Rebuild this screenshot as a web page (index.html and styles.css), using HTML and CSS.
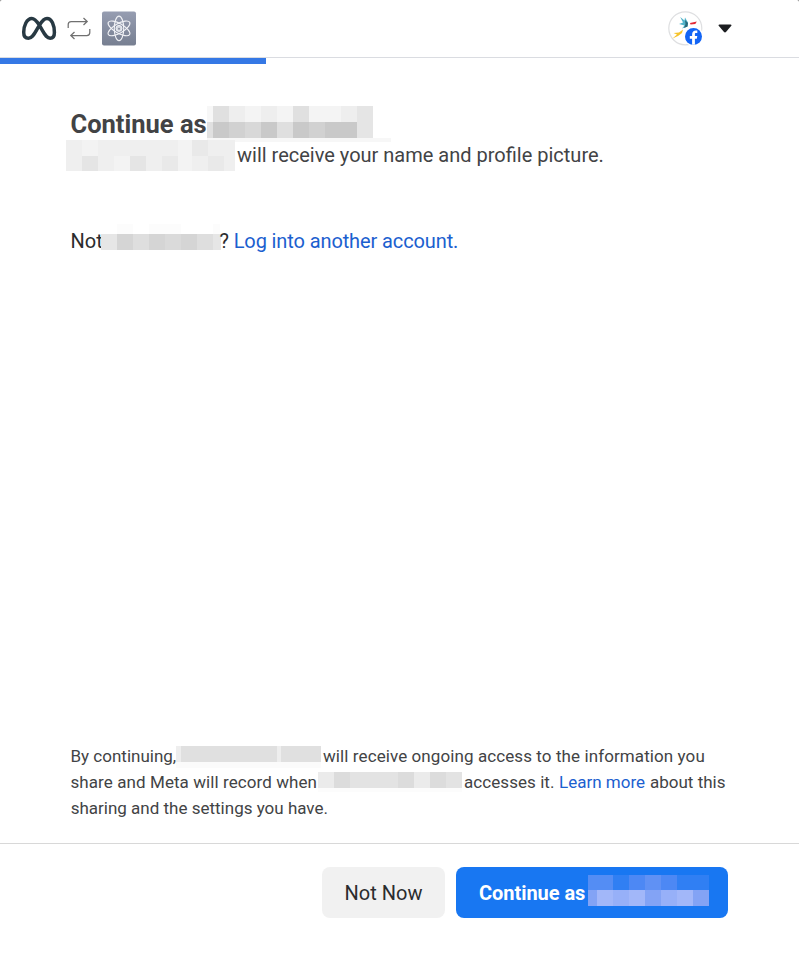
FILE: index.html
```
<!DOCTYPE html>
<html lang="en">
<head>
<meta charset="utf-8">
<title>Continue</title>
<link rel="stylesheet" href="styles.css">
</head>
<body>
<div class="dialog">
  <header class="topbar">
    <svg class="meta" width="36" height="26" viewBox="0 0 36 26" fill="none" stroke="#283943" stroke-width="3.5"><path d="M18 8.5C15.5 4.8 13.7 2.4 10.8 2.4C5.7 2.4 2.7 10 2.7 16.2C2.7 20.1 4.5 22.3 7.5 22.3C10.6 22.3 12.6 19.5 15.8 13.7L18.6 8.9C21.2 4.5 23.1 2.4 26 2.4C30.8 2.4 33.4 9.5 33.4 16.5C33.4 20.3 32.1 22.3 29.2 22.3C26.2 22.3 24.4 19.9 21.2 14.2Z"/></svg>
    <svg class="swap" width="24" height="24" viewBox="0 0 24 24" fill="none" stroke="#707070" stroke-width="1.25"><path d="M1.2 11V7.5Q1.2 4.5 4.2 4.5H20M16.5 1L20.2 4.5L16.5 8M22.8 12V15.5Q22.8 18.5 19.8 18.5H4M7.5 15L3.8 18.5L7.5 22"/></svg>
    <svg class="app" width="34" height="34" viewBox="0 0 34 34">
      <defs><linearGradient id="slate" x2="0" y2="1"><stop stop-color="#969db1"/><stop offset="1" stop-color="#777f91"/></linearGradient></defs>
      <rect y=".5" width="34" height="34" rx="2" fill="url(#slate)"/>
      <g fill="none" stroke="#f0f1f5" stroke-width="1.15"><ellipse cx="17" cy="17.4" rx="4.7" ry="12.3"/><ellipse cx="17" cy="17.4" rx="4.7" ry="12.3" transform="rotate(60 17 17.4)"/><ellipse cx="17" cy="17.4" rx="4.7" ry="12.3" transform="rotate(120 17 17.4)"/></g>
      <circle cx="17" cy="17.4" r="3" fill="#d5d9e1" stroke="#f0f1f5"/><circle cx="17" cy="17.8" r="1" fill="#858c9e"/>
    </svg>
    <svg class="account" width="36" height="36" viewBox="0 0 36 36">
      <circle cx="17.3" cy="17.3" r="16.5" fill="#fff" stroke="#dedfe1" stroke-width="1.2"/>
      <path d="M12.2 6L16.5 9.5L17 6.5L20 11.5L19.5 15.5L14 17.5L16.5 14.5L11 13L15 11.5Z" fill="#52b4ca"/><path d="M17 9L20 12L19.5 15.5L16 17L17.5 13Z" fill="#27697b"/>
      <path d="M22 12L28.8 10.6L27.3 13L22.5 13.5Z" fill="#e32936"/>
      <path d="M5.5 22L11 21.5L15 18.5L14 22L10 25L4.5 27.5L9 23.5Z" fill="#f6c32c"/>
      <circle cx="25.5" cy="25.2" r="10" fill="#fff"/><circle cx="25.5" cy="25.4" r="8.5" fill="#1264f5"/>
      <path d="M24.1 33.7V27.7H21.8V24.9H24.1V23.5C24.1 20.5 25.6 19.4 28 19.4L29.3 19.5V22H28C27.1 22 26.9 22.5 26.9 23.4V24.9H29.3L28.8 27.7H26.9V33.7Z" fill="#fff"/>
    </svg>
    <svg class="caret" width="14" height="9" viewBox="0 0 14 9"><path d="M1.4.4H12.6Q14 .6 13.3 1.8L8.2 7.8Q7 9 5.8 7.8L.7 1.8Q0 .6 1.4.4Z" fill="#1c1e21"/></svg>
  </header>
  <div class="track"><div class="progress"></div></div>

  <main class="content">
    <h1 class="line title"><span class="t-title">Continue as</span><svg class="m-title" width="184" height="36" shape-rendering="crispEdges">
      <path fill="#f7f7f7" d="M0 0h6v16H0zM0 32h184v4H0z"/>
      <path fill="#e0e0e0" d="M6 0h16v16H6zM86 0h16v16H86zM0 16h6v16H0z"/>
      <path fill="#eee" d="M22 0h16v16H22zM54 0h16v16H54zM134 0h16v16h-16z"/>
      <path fill="#f4f4f4" d="M38 0h16v16H38zM70 0h16v16H70zM102 0h32v16h-32z"/>
      <path fill="#e5e5e5" d="M150 0h16v32h-16z"/>
      <path fill="#c9c9c9" d="M6 16h16v16H6zM54 16h16v16H54zM86 16h16v16H86zM118 16h32v16h-32z"/>
      <path fill="#d1d1d1" d="M22 16h16v16H22zM102 16h16v16h-16z"/><path fill="#d8d8d8" d="M38 16h16v16H38z"/><path fill="#dfdfdf" d="M70 16h16v16H70z"/>
    </svg></h1>
    <p class="line sub"><svg class="m-sub" width="169" height="31" shape-rendering="crispEdges">
      <path fill="#efefef" d="M0 0h169v31H0z"/>
      <path fill="#f3f3f3" d="M16 0h16v16H16zM112 0h14v16h-14zM48 16h16v15H48zM112 16h14v15h-14z"/>
      <path fill="#e5e5e5" d="M16 16h16v15H16zM64 16h16v15H64z"/><path fill="#e9e9e9" d="M96 16h16v15H96zM126 0h16v16h-16zM142 16h16v15h-16z"/>
    </svg><span class="t-sub">will receive your name and profile picture.</span></p>
    <p class="line switch"><span class="t-not">Not</span><svg class="m-not" width="120" height="26" shape-rendering="crispEdges">
      <path fill="#fcfcfc" d="M16 0h16v10H16zM48 0h32v10H48zM112 0h7v10h-7z"/>
      <path fill="#dedede" d="M0 10h120v16H0z"/><path fill="#e6e6e6" d="M0 10h16v16H0zM112 10h8v16h-8z"/><path fill="#d5d5d5" d="M16 10h16v16H16zM48 10h16v16H48zM80 10h16v16H80z"/><path fill="#dadada" d="M64 10h16v16H64z"/>
    </svg><span class="t-q">?</span><a class="t-login">Log into another account.</a></p>
  </main>

  <section class="legal">
    <p class="line small"><span class="t-by">By continuing,</span><svg class="m-by" width="145" height="22" shape-rendering="crispEdges"><path fill="#fbfbfb" d="M0 16h145v6H0z"/><path fill="#e0e0e0" d="M0 0h145v16H0z"/><path fill="#eee" d="M0 0h5v16H0zM101 0h4v16h-4z"/></svg><span class="t-will">will receive ongoing access to the information you</span></p>
    <p class="line small"><span class="t-share">share and Meta will record when</span><svg class="m-share" width="144" height="20" shape-rendering="crispEdges"><path fill="#fcfcfc" d="M0 16h144v4H0z"/><path fill="#e3e3e3" d="M0 0h144v16H0z"/><path fill="#ebebeb" d="M0 0h16v16H0zM96 0h16v16H96z"/><path fill="#dcdcdc" d="M16 0h16v16H16zM80 0h16v16H80zM112 0h16v16h-16z"/></svg><span class="t-acc">accesses it.</span><a class="t-learn">Learn more</a><span class="t-about">about this</span></p>
    <p class="line small"><span class="t-set">sharing and the settings you have.</span></p>
  </section>

  <footer class="actions">
    <button class="btn secondary"><span class="t-now">Not Now</span></button>
    <button class="btn primary"><span class="t-cont">Continue as</span><svg class="m-cont" width="121" height="31" shape-rendering="crispEdges">
      <path fill="#548df4" d="M0 0h25v15H0z"/><path fill="#307ff3" d="M25 0h16v15H25zM89 0h32v15H89z"/><path fill="#4d88f4" d="M41 0h16v15H41zM73 0h16v15H73z"/><path fill="#6091f4" d="M57 0h16v15H57z"/>
      <path fill="#83a3f5" d="M0 15h9v16H0zM57 15h16v16H57zM105 15h16v16h-16z"/><path fill="#a2b7f9" d="M9 15h16v16H9zM41 15h16v16H41zM89 15h16v16H89z"/><path fill="#97b0f8" d="M25 15h16v16H25zM73 15h16v16H73z"/>
    </svg></button>
  </footer>
</div>
</body>
</html>
```
FILE: styles.css
```
* { box-sizing: border-box; }
html { background: #777; }
body { margin: 0; font-family: Roboto, "Liberation Sans", sans-serif; color: #424345; }
.dialog { height: 954px; background: #fff; border-radius: 2px 2px 0 0; display: flex; flex-direction: column; overflow: hidden; }
svg { display: block; flex: none; overflow: visible; }
h1, p { margin: 0; }
a { color: #1b60cf; }

.topbar { height: 58px; flex: none; display: flex; align-items: flex-start; padding: 11px 67px 0 21px; border-bottom: 1px solid #dadce1; }
.meta { margin-top: 5px; }
.swap { margin: 6px 0 0 10px; }
.app { margin-left: 11px; }
.account { margin: 0 0 0 auto; }
.caret { margin: 13px 0 0 14px; }
.track { height: 6px; flex: none; }
.progress { width: 266px; height: 6px; background: #3578e5; }

.line { display: flex; align-items: flex-start; white-space: nowrap; }
.content { padding: 42px 0 0 70px; }
.title { height: 34px; font-size: 25.5px; line-height: 36px; font-weight: 700; }
.t-title { width: 137px; padding-left: .5px; }
.sub { height: 90px; margin-left: -4px; font-size: 20px; line-height: 31px; }
.t-sub { margin-left: 2px; }
.switch { height: 30px; margin-top: -6px; font-size: 20px; line-height: 34px; color: #2b2c2e; }
.t-not { width: 31px; padding-left: .5px; }
.t-q { width: 13px; margin-left: -1.5px; }
.t-login { margin-left: 1.2px; letter-spacing: -.11px; }

.legal { margin-top: auto; padding: 0 0 22px 70px; }
.small { height: 26px; font-size: 17px; line-height: 26px; }
.t-by { width: 106px; padding-left: .5px; }
.m-by, .m-share { margin-top: 3px; }
.t-will { margin-left: 2px; letter-spacing: .09px; }
.t-share { width: 248px; padding-left: .5px; letter-spacing: .08px; }
.t-acc { margin-left: 2px; width: 95px; letter-spacing: .06px; }
.t-learn { width: 91px; }
.t-set { padding-left: .7px; }

.actions { height: 111px; flex: none; display: flex; align-items: flex-start; justify-content: flex-end; gap: 11px; padding: 23px 71px 0 0; border-top: 1px solid #d8d8d8; }
.btn { height: 51px; border: 0; border-radius: 8px; padding: 0; font: 400 20px/53px Roboto, "Liberation Sans", sans-serif; white-space: nowrap; display: flex; }
.secondary { width: 123px; justify-content: center; background: #f1f1f1; color: #2b2c2e; }
.primary { width: 272px; padding-left: 23px; background: #1877f2; color: #fff; font-weight: 700; }
.t-cont { width: 109px; text-align: left; letter-spacing: -.05px; }
.m-cont { margin-top: 8px; }
```
